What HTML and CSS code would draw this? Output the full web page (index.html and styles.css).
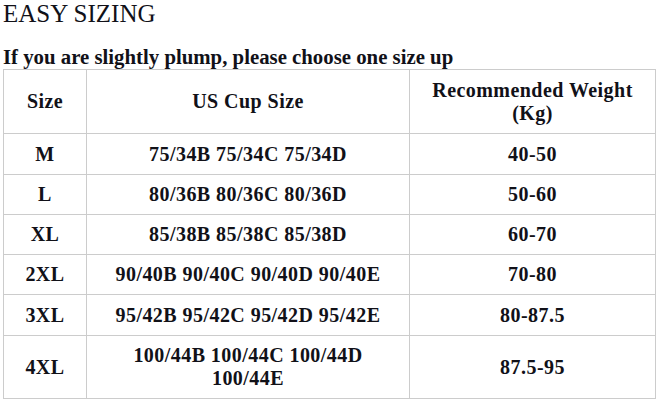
FILE: index.html
```html
<!DOCTYPE html>
<html>
<head>
<meta charset="utf-8">
<link rel="stylesheet" href="styles.css">
</head>
<body>
<h1 class="title">EASY SIZING</h1>
<p class="note">If you are slightly plump, please choose one size up</p>
<table class="chart">
  <colgroup>
    <col class="c1"><col class="c2"><col class="c3">
  </colgroup>
  <tr class="head"><td>Size</td><td>US Cup Size</td><td>Recommended Weight<br>(Kg)</td></tr>
  <tr class="r40"><td>M</td><td>75/34B 75/34C 75/34D</td><td>40-50</td></tr>
  <tr><td>L</td><td>80/36B 80/36C 80/36D</td><td>50-60</td></tr>
  <tr><td>XL</td><td>85/38B 85/38C 85/38D</td><td>60-70</td></tr>
  <tr><td>2XL</td><td>90/40B 90/40C 90/40D 90/40E</td><td>70-80</td></tr>
  <tr class="r40"><td>3XL</td><td>95/42B 95/42C 95/42D 95/42E</td><td>80-87.5</td></tr>
  <tr class="tall"><td>4XL</td><td>100/44B 100/44C 100/44D<br>100/44E</td><td>87.5-95</td></tr>
</table>
</body>
</html>
```
FILE: styles.css
```css
html, body {
  margin: 0;
  padding: 0;
  background: #ffffff;
  color: #111118;
  font-family: "Liberation Serif", "Times New Roman", serif;
}
.title {
  margin: 0;
  padding: 0 0 0 3px;
  font-size: 25px;
  line-height: 28px;
  font-weight: normal;
}
.note {
  margin: 18px 0 0 0;
  padding-left: 3px;
  font-size: 20.8px;
  line-height: 22px;
  font-weight: bold;
}
.chart {
  margin: 1px 0 0 3px;
  width: 652px;
  border-collapse: collapse;
  table-layout: fixed;
  font-size: 20px;
  letter-spacing: 0.45px;
  font-weight: bold;
}
.c1 { width: 83px; }
.c2 { width: 323px; }
.c3 { width: 246px; }
.chart td {
  border: 1px solid #cccccc;
  text-align: center;
  vertical-align: middle;
  height: 39px;
  padding: 0;
  line-height: 23px;
}
.chart .head td { height: 63px; }
.chart .r40 td { height: 40px; }
.chart .tall td { height: 62px; }
```
